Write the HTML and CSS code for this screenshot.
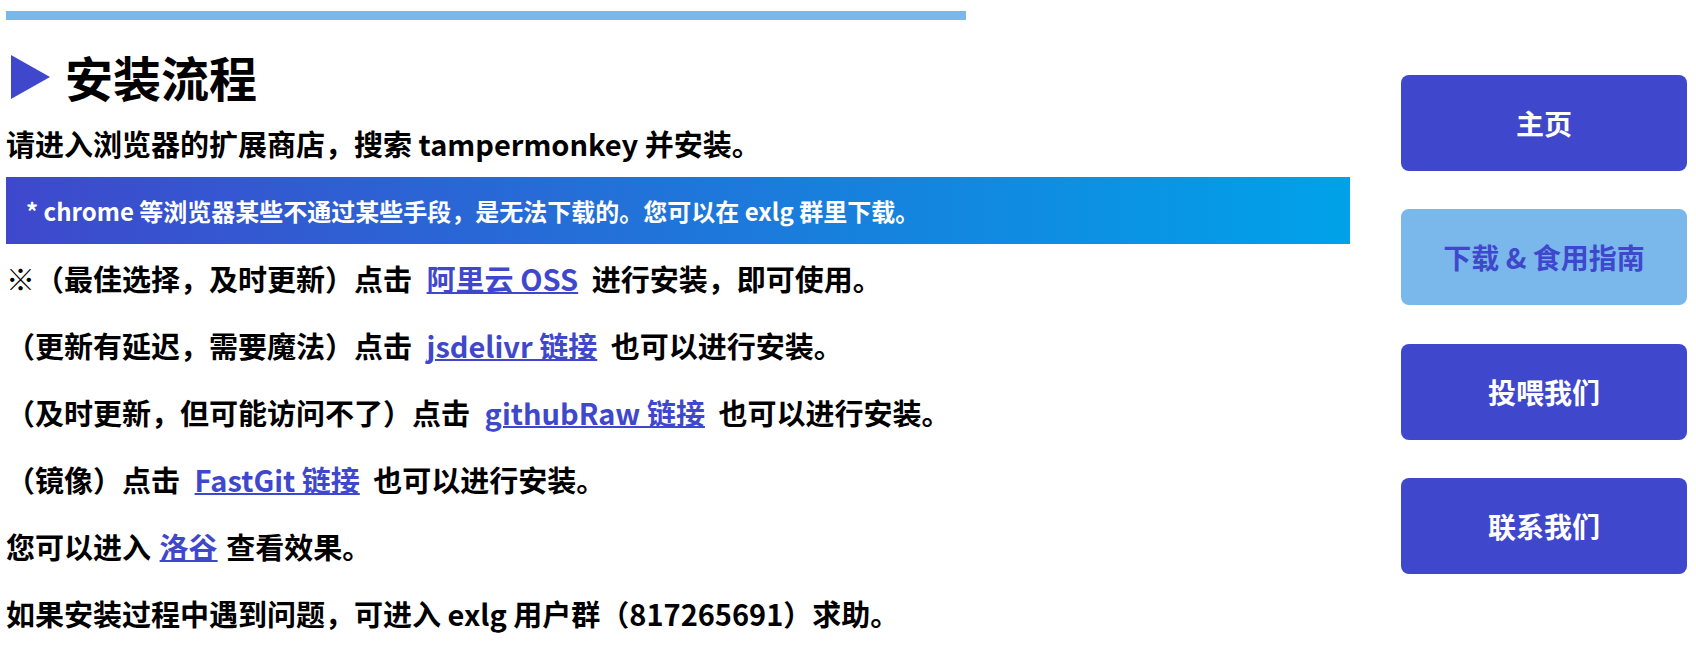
FILE: index.html
```html
<!DOCTYPE html>
<html lang="zh-CN">
<head>
<meta charset="utf-8">
<title>安装流程</title>
<link rel="stylesheet" href="styles.css">
</head>
<body>
<div class="page">
  <main class="content">
    <div class="topbar"></div>
    <h1 class="title"><svg class="tri" viewBox="0 0 39 44" width="39" height="44"><polygon points="0,0 39,22 0,44"/></svg><span>安装流程</span></h1>
    <p class="line first">请进入浏览器的扩展商店，搜索 tampermonkey 并安装。</p>
    <div class="banner">* chrome 等浏览器某些不通过某些手段，是无法下载的。您可以在 exlg 群里下载。</div>
    <div class="steps">
      <p class="line">※（最佳选择，及时更新）点击 <a class="lk wide" href="#">阿里云 OSS</a> 进行安装，即可使用。</p>
      <p class="line">（更新有延迟，需要魔法）点击 <a class="lk wide" href="#">jsdelivr 链接</a> 也可以进行安装。</p>
      <p class="line">（及时更新，但可能访问不了）点击 <a class="lk wide" href="#">githubRaw 链接</a> 也可以进行安装。</p>
      <p class="line">（镜像）点击 <a class="lk wide" href="#">FastGit 链接</a> 也可以进行安装。</p>
      <p class="line">您可以进入 <a class="lk" href="#">洛谷</a> 查看效果。</p>
      <p class="line">如果安装过程中遇到问题，可进入 exlg 用户群（817265691）求助。</p>
    </div>
  </main>
  <nav class="side">
    <a class="btn" href="#">主页</a>
    <a class="btn active" href="#">下载 &amp; 食用指南</a>
    <a class="btn" href="#">投喂我们</a>
    <a class="btn" href="#">联系我们</a>
  </nav>
</div>
</body>
</html>
```

FILE: styles.css
```css
* { box-sizing: border-box; }
html, body { margin: 0; padding: 0; background: #ffffff; }
body {
  font-family: "Noto Sans CJK SC", "Noto Sans", sans-serif;
  font-weight: 700;
  color: #000000;
}
.page { display: flex; align-items: flex-start; }
.content {
  width: 1350px;
  padding-left: 6px;
  display: flex;
  flex-direction: column;
}
.topbar {
  margin-top: 11px;
  width: 960px;
  height: 9px;
  background: #7ab8eb;
}
.title {
  margin: 26px 0 0;
  height: 60px;
  padding-left: 5px;
  display: flex;
  align-items: center;
  gap: 15px;
  font-size: 48px;
  line-height: 60px;
  font-weight: 700;
}
.tri { fill: #3f48cc; flex: none; margin-top: 2px; }
.line {
  margin: 0;
  font-size: 29px;
  line-height: 40px;
  white-space: nowrap;
}
.first { margin-top: 17px; }
.banner {
  margin-top: 14px;
  height: 67px;
  padding-left: 20px;
  display: flex;
  align-items: center;
  font-size: 24px;
  color: #ffffff;
  background: linear-gradient(90deg, #3f48cc, #00a2e8);
}
.steps {
  margin-top: 14px;
  display: flex;
  flex-direction: column;
  gap: 27px;
}
.lk {
  margin: 0 2px;
  color: #3f48cc;
  text-decoration: underline;
  text-decoration-thickness: 2px;
}
.lk.wide { margin: 0 7px 0 8px; }
.side {
  margin-left: 51px;
  width: 286px;
  padding-top: 75px;
  display: flex;
  flex-direction: column;
  gap: 38.4px;
}
.btn {
  height: 96px;
  border-radius: 8px;
  display: flex;
  align-items: center;
  justify-content: center;
  font-size: 28px;
  color: #ffffff;
  background: #3f48cc;
  text-decoration: none;
}
.btn.active { background: #7ab8eb; color: #3f48cc; }
```
